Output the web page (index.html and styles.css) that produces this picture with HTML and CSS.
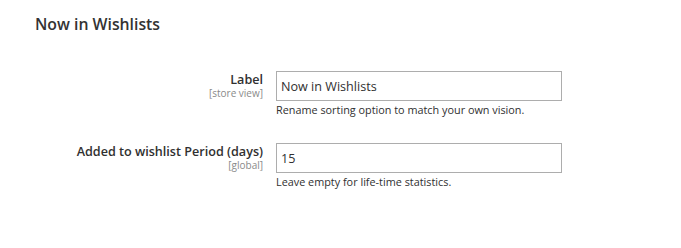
FILE: index.html
```html
<!DOCTYPE html>
<html lang="en">
<head>
<meta charset="utf-8">
<title>Now in Wishlists</title>
<link rel="stylesheet" href="styles.css">
</head>
<body>
<section class="section">
  <h2 class="section-title">Now in Wishlists</h2>
  <div class="fields">
    <div class="field">
      <label class="field-label" for="f-label">
        <span class="label-text">Label</span>
        <span class="scope">[store view]</span>
      </label>
      <div class="field-control">
        <input id="f-label" class="input-text" type="text" value="Now in Wishlists">
        <p class="note">Rename sorting option to match your own vision.</p>
      </div>
    </div>
    <div class="field">
      <label class="field-label" for="f-period">
        <span class="label-text">Added to wishlist Period (days)</span>
        <span class="scope">[global]</span>
      </label>
      <div class="field-control">
        <input id="f-period" class="input-text" type="text" value="15">
        <p class="note">Leave empty for life-time statistics.</p>
      </div>
    </div>
  </div>
</section>
</body>
</html>
```
FILE: styles.css
```css
html, body {
  margin: 0;
  padding: 0;
  background: #ffffff;
}

body {
  font-family: "Open Sans", "Liberation Sans", sans-serif;
  color: #303030;
  width: 681px;
  height: 248px;
  overflow: hidden;
}

.section {
  padding-top: 14px;
}

.section-title {
  margin: 0 0 0 35px;
  font-size: 15.8px;
  font-weight: 600;
  line-height: 20px;
  color: #333333;
}

.fields {
  margin-top: 37px;
  display: flex;
  flex-direction: column;
  gap: 26px;
}

.field {
  display: grid;
  grid-template-columns: 263px 286px;
  column-gap: 13px;
  align-items: start;
}

.field-label {
  display: flex;
  flex-direction: column;
  align-items: flex-end;
  text-align: right;
  padding-top: 2px;
}

.label-text {
  font-size: 12.6px;
  font-weight: 600;
  line-height: 14px;
  color: #303030;
}

.scope {
  font-size: 10px;
  line-height: 11px;
  margin-top: 1px;
  color: #8a8a8a;
}

.field-control {
  display: flex;
  flex-direction: column;
}

.input-text {
  box-sizing: border-box;
  width: 286px;
  height: 30px;
  margin: 0;
  padding: 0 4px;
  border: 1px solid #adadad;
  border-radius: 0;
  font-family: "Open Sans", "Liberation Sans", sans-serif;
  font-size: 12.6px;
  color: #303030;
  background: #ffffff;
  outline: none;
}

.note {
  margin: 1px 0 0;
  font-size: 10.85px;
  line-height: 15px;
  color: #303030;
}
```
